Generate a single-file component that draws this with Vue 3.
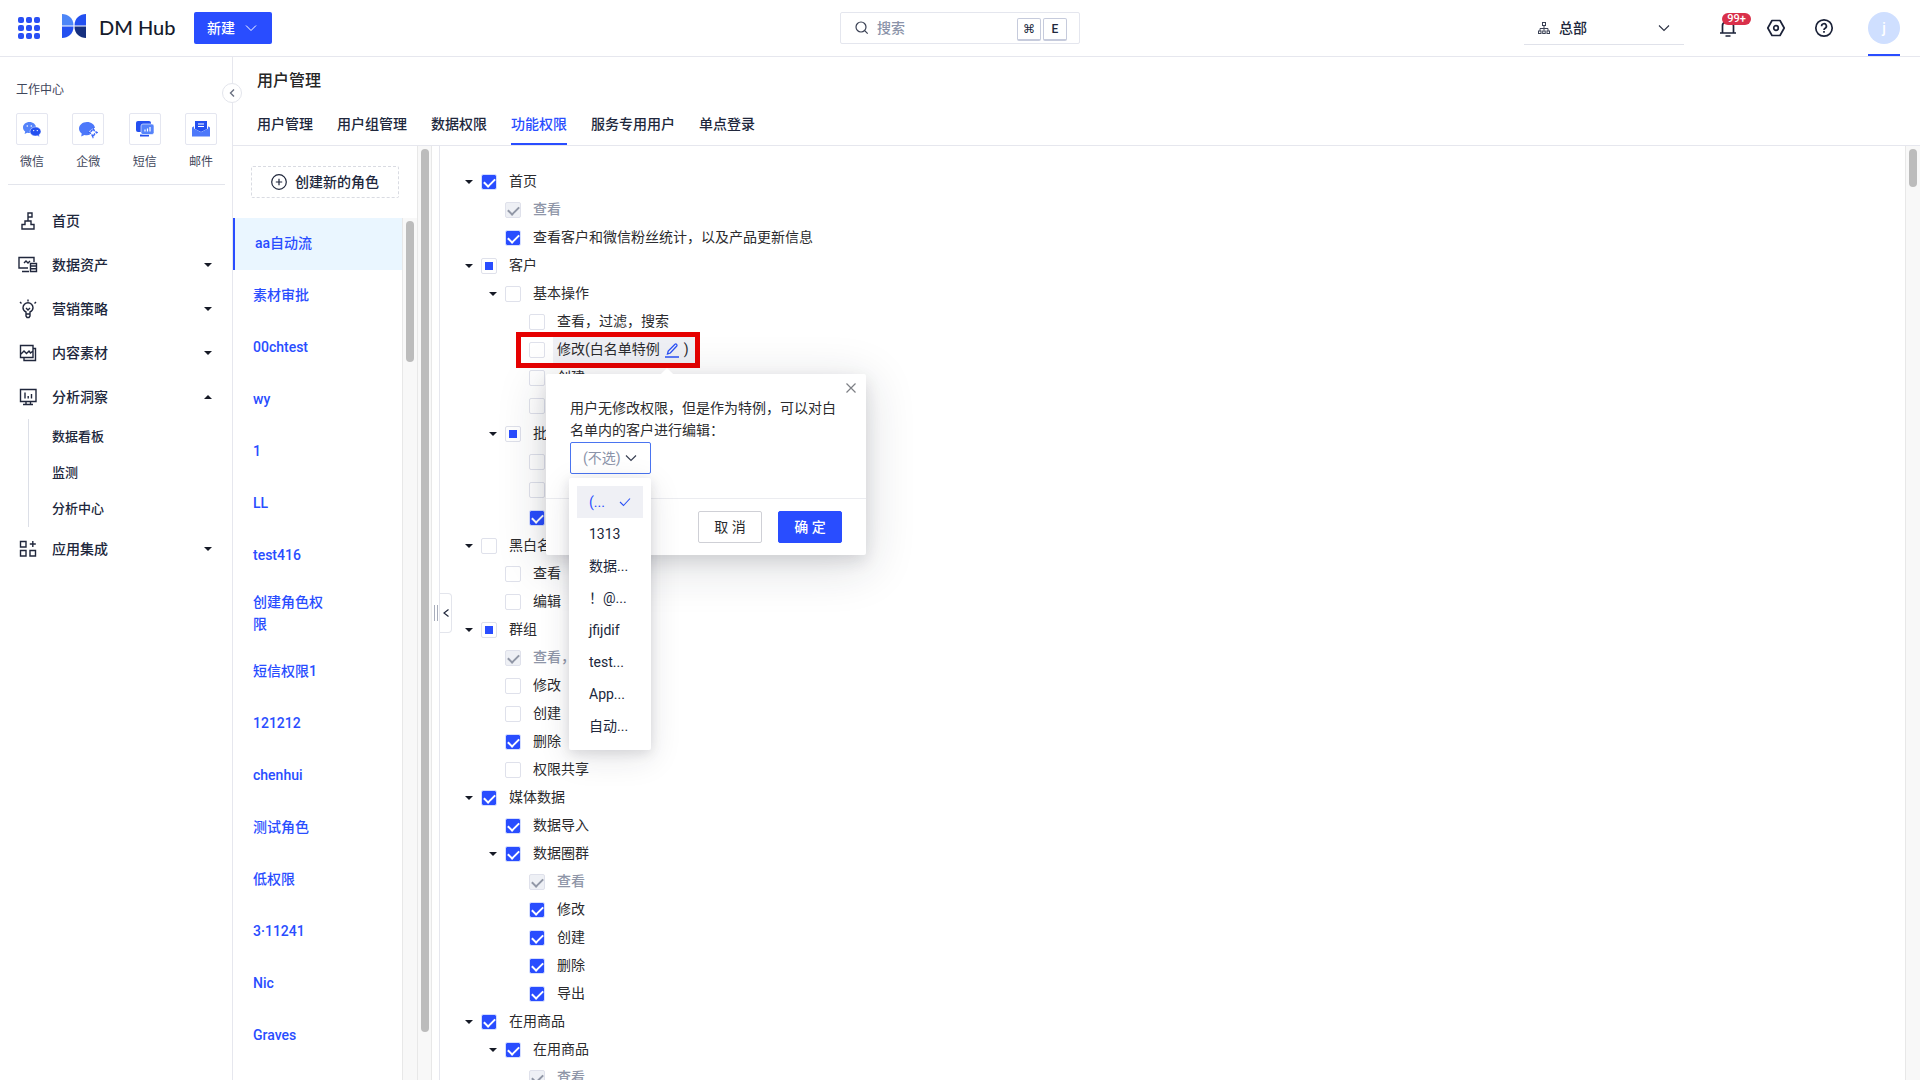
<script setup>
import { ref } from 'vue'

const shortcuts = [
  { label: '微信', icon: 'wechat' },
  { label: '企微', icon: 'wecom' },
  { label: '短信', icon: 'sms' },
  { label: '邮件', icon: 'mail' },
]

const menu = [
  { label: '首页', icon: 'home' },
  { label: '数据资产', icon: 'data', caret: 'down' },
  { label: '营销策略', icon: 'bulb', caret: 'down' },
  { label: '内容素材', icon: 'content', caret: 'down' },
  { label: '分析洞察', icon: 'analysis', caret: 'up', children: ['数据看板', '监测', '分析中心'] },
  { label: '应用集成', icon: 'apps', caret: 'down' },
]

const tabs = ['用户管理', '用户组管理', '数据权限', '功能权限', '服务专用用户', '单点登录']
const activeTab = ref('功能权限')

const roles = [
  'aa自动流', '素材审批', '00chtest', 'wy', '1', 'LL', 'test416', '创建角色权限',
  '短信权限1', '121212', 'chenhui', '测试角色', '低权限', '3·11241', 'Nic', 'Graves',
]
const activeRole = ref('aa自动流')

const tree = ref([
  { level: 0, label: '首页', state: 'on', open: true },
  { level: 1, label: '查看', state: 'locked' },
  { level: 1, label: '查看客户和微信粉丝统计，以及产品更新信息', state: 'on' },
  { level: 0, label: '客户', state: 'part', open: true },
  { level: 1, label: '基本操作', state: 'off', open: true },
  { level: 2, label: '查看，过滤，搜索', state: 'off' },
  { level: 2, label: '修改', state: 'off', exception: true },
  { level: 2, label: '创建', state: 'off' },
  { level: 2, label: '删除', state: 'off' },
  { level: 1, label: '批量操作', state: 'part', open: true },
  { level: 2, label: '导入', state: 'off' },
  { level: 2, label: '修改', state: 'off' },
  { level: 2, label: '导出', state: 'on' },
  { level: 0, label: '黑白名单', state: 'off', open: true },
  { level: 1, label: '查看', state: 'off' },
  { level: 1, label: '编辑', state: 'off' },
  { level: 0, label: '群组', state: 'part', open: true },
  { level: 1, label: '查看，搜索', state: 'locked' },
  { level: 1, label: '修改', state: 'off' },
  { level: 1, label: '创建', state: 'off' },
  { level: 1, label: '删除', state: 'on' },
  { level: 1, label: '权限共享', state: 'off' },
  { level: 0, label: '媒体数据', state: 'on', open: true },
  { level: 1, label: '数据导入', state: 'on' },
  { level: 1, label: '数据圈群', state: 'on', open: true },
  { level: 2, label: '查看', state: 'locked' },
  { level: 2, label: '修改', state: 'on' },
  { level: 2, label: '创建', state: 'on' },
  { level: 2, label: '删除', state: 'on' },
  { level: 2, label: '导出', state: 'on' },
  { level: 0, label: '在用商品', state: 'on', open: true },
  { level: 1, label: '在用商品', state: 'on', open: true },
  { level: 2, label: '查看', state: 'locked' },
])

const options = ['(...', '1313', '数据...', '！@...', 'jfijdif', 'test...', 'App...', '自动...']
</script>

<template>
  <div class="app">
    <header class="topbar">
      <div class="brand">
        <button class="plain" aria-label="应用">
          <svg width="22" height="22" viewBox="0 0 22 22" fill="#2a50f5">
            <template v-for="r in 3" :key="r">
              <rect v-for="c in 3" :key="c" :x="(c - 1) * 8" :y="(r - 1) * 8" width="6" height="6" rx="2" />
            </template>
          </svg>
        </button>
        <svg class="logo" width="24" height="24" viewBox="0 0 24 24">
          <path d="M0 0C6 0 11.500 4 11.500 11.500H0Z" fill="#4d86f7" />
          <path d="M24 0C18 0 12.500 4 12.500 11.500H24Z" fill="#2350f0" />
          <path d="M0 12.500H11.500C11.500 20 6 24 0 24Z" fill="#2350f0" />
          <path d="M24 12.500H12.500C12.500 20 18 24 24 24Z" fill="#16307f" />
        </svg>
        <span class="wordmark">DM Hub</span>
        <button class="create">
          新建
          <svg width="12" height="12" viewBox="0 0 12 12" fill="none" stroke="#fff" stroke-width="1"><path d="M1 3.500l5 5 5-5" /></svg>
        </button>
      </div>

      <label class="search">
        <svg width="14" height="14" viewBox="0 0 14 14" fill="none" stroke="#3a4154" stroke-width="1.2"><circle cx="6" cy="6" r="5" /><path d="M9.700 9.700l3 3" /></svg>
        <input type="text" placeholder="搜索" aria-label="搜索" />
        <kbd>⌘</kbd>
        <kbd>E</kbd>
      </label>

      <div class="tools">
        <label class="org">
          <svg width="12" height="12" viewBox="0 0 12 12" fill="none" stroke="#3a4154" stroke-width="1"><rect x="4.500" y=".5" width="3" height="3" /><path d="M6 3.500v5M2 9V6.500h8V9" /><rect x=".5" y="9" width="2.500" height="2.500" /><rect x="4.700" y="9" width="2.500" height="2.500" /><rect x="9" y="9" width="2.500" height="2.500" /></svg>
          <select aria-label="组织"><option>总部</option></select>
          <svg width="12" height="12" viewBox="0 0 12 12" fill="none" stroke="#2a3042" stroke-width="1.1"><path d="M1 3.500l5 5 5-5" /></svg>
        </label>
        <button class="plain bell" aria-label="通知">
          <svg width="20" height="20" viewBox="0 0 20 20" fill="none" stroke="#1b2238" stroke-width="1.700"><path d="M4.500 14.500V8a5.500 5.500 0 0 1 11 0v6.500M2 15h16M7.500 18h5" /></svg>
          <span class="badge">99+</span>
        </button>
        <button class="plain" aria-label="设置">
          <svg width="20" height="20" viewBox="0 0 20 20" fill="none" stroke="#1b2238" stroke-width="1.700"><path d="M6 2.500h8L18.200 10 14 17.500H6L1.800 10Z" stroke-linejoin="round" /><circle cx="10" cy="10" r="2.300" /></svg>
        </button>
        <button class="plain" aria-label="帮助">
          <svg width="20" height="20" viewBox="0 0 20 20" fill="none" stroke="#1b2238" stroke-width="1.700"><circle cx="10" cy="10" r="8.200" /><path d="M7.600 8.200a2.400 2.400 0 1 1 3.600 2c-.8.500-1.200.9-1.200 1.700M10 13v1.700" /></svg>
        </button>
        <button class="avatar"><span>j</span></button>
      </div>
    </header>

    <div class="body">
      <aside class="sidebar">
        <h2>工作中心</h2>
        <nav class="shortcuts">
          <a v-for="s in shortcuts" :key="s.label" href="#">
            <span class="tile">
              <svg v-if="s.icon === 'wechat'" width="20" height="20" viewBox="0 0 20 20">
                <path d="M7.500 3C3.900 3 1 5.400 1 8.500c0 1.700.8 3 2.200 4L2.600 15l2.700-1.300c.7.200 1.400.3 2.200.3C11 14 14 11.600 14 8.500S11 3 7.500 3Z" fill="#5583fa" />
                <path d="M13.500 8C10.400 8 8 10 8 12.500S10.400 17 13.500 17c.6 0 1.200-.1 1.800-.3l2.200 1-.5-1.900c1.200-.8 2-2 2-3.300C19 10 16.600 8 13.500 8Z" fill="#2450f0" stroke="#fff" stroke-width=".5" />
                <g fill="#fff"><circle cx="5.300" cy="7" r=".8" /><circle cx="9.300" cy="7" r=".8" /><circle cx="11.700" cy="11.600" r=".7" /><circle cx="15.300" cy="11.600" r=".7" /></g>
              </svg>
              <svg v-else-if="s.icon === 'wecom'" width="20" height="20" viewBox="0 0 20 20">
                <path d="M9 3C4.600 3 1 5.900 1 9.600c0 2 1 3.700 2.700 4.900L3.200 17.500l3.200-1.600c.8.200 1.700.3 2.600.3 1 0 2-.2 2.900-.5L11 12.500l4-3.500h2C16.600 5.500 13.200 3 9 3Z" fill="#4d78fa" />
                <path d="M15 9.500l1.500 2.500 2.500 1.500-2.500 1.500L15 18l-1.500-3L11 13.500l2.500-1.500Z" fill="none" stroke="#3b66f8" stroke-width="1.500" stroke-dasharray="3 1" />
              </svg>
              <svg v-else-if="s.icon === 'sms'" width="20" height="20" viewBox="0 0 20 20">
                <path d="M3 2h11a2 2 0 0 1 2 2v9H3a2 2 0 0 1-2-2V4a2 2 0 0 1 2-2Z" fill="#2450f0" /><path d="M5 15.500h9v2H5Z" fill="#2450f0" />
                <rect x="6" y="5" width="13" height="10.500" rx="2" fill="#5583fa" stroke="#fff" stroke-width=".6" />
                <path d="M10 12.500v-2M12.500 12.500v-3M15 12.500V8" stroke="#fff" stroke-width="1.200" />
              </svg>
              <svg v-else width="20" height="20" viewBox="0 0 20 20">
                <path d="M4 2h12v8l-6 3-6-3Z" fill="#2450f0" /><path d="M7 5h6M7 7.500h6" stroke="#fff" stroke-width="1.100" />
                <path d="M1 8.500l2-1.300v2.300l7 3.700 7-3.700V7.200l2 1.300v9H1Z" fill="#4d78fa" />
              </svg>
            </span>
            {{ s.label }}
          </a>
        </nav>
        <nav class="menu">
          <template v-for="m in menu" :key="m.label">
            <a class="entry" href="#">
              <svg width="20" height="20" viewBox="0 0 20 20" fill="none" stroke="#20273c" stroke-width="1.400">
                <path v-if="m.icon === 'home'" d="M4 18v-4.500h3V10h6v3.500h3V18ZM10 10V2h4v4h-4" />
                <path v-else-if="m.icon === 'data'" d="M10 13H1V2.500h15V7M4 16.500h7M6 8l2-2 2 2 2-2M12.500 8.500h6v8h-6ZM12.500 11h6M12.500 13.800h6" />
                <path v-else-if="m.icon === 'bulb'" d="M8 15v-2C6 12 5 10.500 5 8.800a5 5 0 0 1 10 0c0 1.700-1 3.200-3 4.200v2ZM8 15v2l1 1.500h2l1-1.500v-2M8 9l2 2 2-2M10 .5V2.500M2 3l1.500 1.500M18 3l-1.500 1.500" />
                <path v-else-if="m.icon === 'content'" d="M2.500 2.500h12.500v12H2.500ZM15 5.500h2.500v12H6v-3M3 11l3-3 2.500 2.500L11 8l1.500 2 2.500-2" />
                <path v-else-if="m.icon === 'analysis'" d="M2.500 2.500h15.500v12H2.500ZM5 17.500h10M8 14.500v3M12.500 14.500v3M7 5.500v6M10.200 9v2.500M13.500 7v4.500" />
                <path v-else d="M2.500 2.500h5.500v5.500H2.500ZM2.500 11.500h5.500v5.500H2.500ZM12 11.500h5.500v5.500H12ZM14.800 2v6M11.800 5h6" />
              </svg>
              <span>{{ m.label }}</span>
              <i v-if="m.caret" :class="['caret', m.caret]"></i>
            </a>
            <div v-if="m.children" class="submenu">
              <a v-for="c in m.children" :key="c" href="#">{{ c }}</a>
            </div>
          </template>
        </nav>
        <button class="fold" aria-label="收起菜单">
          <svg width="6" height="8" viewBox="0 0 6 8" fill="none" stroke="#6a7080" stroke-width="1.400"><path d="M5 .5L1.500 4 5 7.500" /></svg>
        </button>
      </aside>

      <main class="page">
        <div class="page-head">
          <h1>用户管理</h1>
          <nav class="tabs">
            <a v-for="t in tabs" :key="t" href="#" :class="{ active: t === activeTab }" @click.prevent="activeTab = t">{{ t }}</a>
          </nav>
        </div>

        <div class="panes">
          <section class="roles">
            <div class="add-wrap">
              <button class="add">
                <svg width="16" height="16" viewBox="0 0 16 16" fill="none" stroke="#20273c" stroke-width="1.200"><circle cx="8" cy="8" r="7.300" /><path d="M8 4.800v6.400M4.800 8h6.400" /></svg>
                创建新的角色
              </button>
            </div>
            <div class="role-scroll">
              <ul>
                <li v-for="r in roles" :key="r" :class="{ active: r === activeRole }">
                  <a href="#" @click.prevent="activeRole = r">{{ r }}</a>
                </li>
              </ul>
              <div class="track"><i class="thumb short"></i></div>
            </div>
          </section>
          <div class="track outer"><i class="thumb long"></i></div>
          <div class="splitter">
            <i class="grip"></i>
            <button class="handle" aria-label="收起">
              <svg width="6" height="8" viewBox="0 0 6 8" fill="none" stroke="#20273c" stroke-width="1.200"><path d="M5.500 .5L1 4l4.500 3.500" /></svg>
            </button>
          </div>

          <section class="tree">
            <div v-for="(n, i) in tree" :key="i" :class="['node', 'level-' + n.level]">
              <span class="switch"><i v-if="n.open" class="caret down"></i></span>
              <input
                :id="'perm-' + i" type="checkbox" :class="n.state"
                :checked="n.state === 'on' || n.state === 'locked'" :disabled="n.state === 'locked'"
              />
              <label v-if="!n.exception" :for="'perm-' + i" :class="{ muted: n.state === 'locked' }">{{ n.label }}</label>
              <template v-else>
                <span class="selected">
                  <label :for="'perm-' + i">{{ n.label }}(白名单特例</label>
                  <button class="plain edit" aria-label="编辑白名单特例">
                    <svg width="16" height="16" viewBox="0 0 16 16" fill="none" stroke="#2a50f5" stroke-width="1.300"><path d="M3.500 12l.7-3L11 2.200a1.300 1.300 0 0 1 1.800 1.800L6.300 11ZM1 15h14" /></svg>
                  </button>
                  <span>)</span>
                </span>
                <div class="highlight"></div>
                <div class="popover" role="dialog">
                  <i class="arrow"></i>
                  <button class="plain close" aria-label="关闭">
                    <svg width="10" height="10" viewBox="0 0 10 10" stroke="#7d7f85" stroke-width="1.200"><path d="M.5 .5l9 9M9.500 .5l-9 9" /></svg>
                  </button>
                  <div class="pop-body">
                    <label for="whitelist">用户无修改权限，但是作为特例，可以对白名单内的客户进行编辑：</label>
                    <div class="picker">
                      <select id="whitelist"><option>(不选)</option></select>
                      <svg width="12" height="12" viewBox="0 0 12 12" fill="none" stroke="#3a4154" stroke-width="1.200"><path d="M1 3.500l5 5 5-5" /></svg>
                      <ul class="options" role="listbox">
                        <li v-for="(o, k) in options" :key="o" role="option" :aria-selected="k === 0">
                          {{ o }}
                          <svg v-if="k === 0" width="12" height="12" viewBox="0 0 12 12" fill="none" stroke="#2a50f5" stroke-width="1.100"><path d="M1 6l3.500 3.500L11 2.500" /></svg>
                        </li>
                      </ul>
                    </div>
                  </div>
                  <div class="pop-foot">
                    <button class="cancel">取 消</button>
                    <button class="ok">确 定</button>
                  </div>
                </div>
              </template>
            </div>
          </section>
          <div class="track right"><i class="thumb tiny"></i></div>
        </div>
      </main>
    </div>
  </div>
</template>

<style>
body { background: #fff; }
</style>

<style scoped>
* { box-sizing: border-box; }
.app {
  display: flex; flex-direction: column; height: 100vh; overflow: hidden;
  font: 500 14px/22px Roboto, "Noto Sans CJK SC", sans-serif; color: #20273c;
}
button, input, select { font: inherit; color: inherit; margin: 0; }
button { cursor: pointer; }
a { color: inherit; text-decoration: none; }
ul { list-style: none; margin: 0; padding: 0; }
svg { display: block; flex: none; }
.plain { border: 0; background: none; padding: 0; }

.topbar {
  flex: none; display: grid; grid-template-columns: 1fr 240px 1fr; align-items: center;
  height: 57px; padding: 0 20px; border-bottom: 1px solid #e6e7ee;
}
.brand { display: flex; align-items: center; margin-left: -2px; }
.logo { margin: 0 13px 4px 22px; }
.wordmark { font: 500 20px/24px Lato, "Noto Sans CJK SC", sans-serif; color: #161b2c; width: 95px; padding-bottom: 2px; }
.create {
  display: flex; align-items: center; gap: 10px; height: 32px; width: 78px; padding: 0 0 0 13px;
  border: 0; border-radius: 2px; background: #294dff; color: #fff; white-space: nowrap;
}
.search { display: flex; align-items: center; height: 32px; padding: 0 12px 0 14px; border: 1px solid #e4e6ee; border-radius: 2px; gap: 2px; }
.search input { flex: 1; min-width: 0; border: 0; outline: 0; padding: 0 0 0 6px; background: none; }
.search input::placeholder { color: #8b93a9; opacity: 1; }
kbd {
  width: 24px; height: 23px; margin-top: 3px; border: 1px solid #c6cbdc; border-bottom-width: 2px; border-radius: 2px;
  font: 500 12px/20px Roboto, "DejaVu Sans", sans-serif; text-align: center;
}
.tools { display: flex; align-items: center; justify-content: flex-end; gap: 28px; }
.org { display: flex; align-items: center; width: 160px; height: 34px; padding: 0 14px; margin-right: 6px; border-bottom: 1px solid #e0e2ea; }
.org select { flex: 1; appearance: none; border: 0; background: none; padding: 0 0 0 9px; }
.bell { position: relative; }
.badge {
  position: absolute; left: 4px; top: -5px; width: 29px; height: 12px; border-radius: 6px;
  background: #d9304a; color: #fff; font: 500 11px/12px Roboto, sans-serif; text-align: center;
}
.avatar { height: 56px; width: 32px; margin-left: 6px; padding: 0; border: 0; border-bottom: 2px solid #294dff; background: none; }
.avatar span { display: block; height: 32px; margin-top: 2px; border-radius: 50%; background: #cfdfff; color: #fff; line-height: 32px; }

.body { flex: 1; display: flex; min-height: 0; }
.sidebar { position: relative; z-index: 1; flex: none; width: 233px; padding-top: 22px; border-right: 1px solid #e6e7ee; }
.sidebar h2 { margin: 0 16px 12px; font-size: 12px; line-height: 22px; font-weight: 400; color: #3f475c; }
.shortcuts { display: flex; justify-content: space-between; margin: 0 7px 0 8px; padding: 0 8px 11px; border-bottom: 1px solid #e3e5ec; }
.shortcuts a { display: flex; flex-direction: column; align-items: center; gap: 6px; font-size: 12px; font-weight: 400; color: #3f475c; }
.tile { display: flex; align-items: center; justify-content: center; width: 32px; height: 32px; border: 1px solid #e4e6f0; border-radius: 2px; }
.menu { padding-top: 14px; }
.entry { display: flex; align-items: center; height: 44px; padding: 0 20px 0 18px; gap: 14px; }
.caret { width: 0; height: 0; border: solid transparent; border-width: 0 4px; }
.caret.down { border-top: 4px solid #161a26; }
.caret.up { border-bottom: 4px solid #161a26; }
.entry .caret { margin-left: auto; }
.submenu { margin-left: 28px; border-left: 1px solid #dcdfe7; }
.submenu a { display: block; height: 36px; padding-left: 23px; font-size: 13px; line-height: 36px; }
.fold {
  position: absolute; right: -10px; top: 26px; width: 20px; height: 20px; border: 1px solid #e3e5ec; border-radius: 50%;
  background: #fff; display: flex; align-items: center; justify-content: center; padding: 0;
}

.page { flex: 1; min-width: 0; display: flex; flex-direction: column; }
.page-head { flex: none; padding: 12px 24px 0; border-bottom: 1px solid #e6e7ee; }
h1 { margin: 0 0 12px; font-size: 16px; line-height: 24px; font-weight: 500; color: #262626; }
.tabs { display: flex; gap: 24px; }
.tabs a { height: 40px; line-height: 38px; border-bottom: 2px solid transparent; }
.tabs a.active { color: #294dff; border-color: #294dff; }

.panes { flex: 1; display: flex; min-height: 0; }
.roles { flex: none; width: 184px; display: flex; flex-direction: column; }
.add-wrap { padding: 20px 18px; }
.add {
  width: 148px; height: 32px; display: flex; align-items: center; justify-content: center; gap: 8px; padding: 0;
  border: 1px dashed #d9dbe2; border-radius: 2px; background: #fff;
}
.role-scroll { flex: 1; display: flex; min-height: 0; overflow: hidden; }
.role-scroll ul { flex: 1; }
.role-scroll li { display: flex; align-items: center; min-height: 52px; padding: 9px 72px 11px 20px; color: #294dff; }
.role-scroll li.active { background: #eaf6ff; border-left: 2px solid #294dff; }
.track { flex: none; width: 15px; background: #f8f8f8; border: solid #e8e8e8; border-width: 0 0 0 1px; padding: 3px; }
.track.outer { border-right-width: 1px; }
.thumb { display: block; width: 8px; border-radius: 4px; background: #bcbcbc; }
.short { height: 141px; }
.long { height: calc(100% - 45px); }
.tiny { height: 38px; }
.splitter { position: relative; flex: none; width: 8px; border-right: 1px solid #e6e7ee; display: flex; align-items: center; justify-content: center; }
.grip { width: 4px; height: 16px; border: solid #a8adbb; border-width: 0 1px; }
.handle {
  position: absolute; left: 8px; top: 50%; width: 12px; height: 40px; margin-top: -20px; padding: 0; display: flex; align-items: center; justify-content: center;
  border: 1px solid #e3e5ec; border-left: 0; border-radius: 0 4px 4px 0; background: #fff;
}

.tree { flex: 1; min-width: 0; padding: 22px 0 0 17px; color: #2b2b2e; font-weight: 400; }
.node { position: relative; display: flex; align-items: center; height: 28px; }
.level-1 { padding-left: 24px; }
.level-2 { padding-left: 48px; }
.switch { width: 24px; display: flex; justify-content: center; }
.node > label { margin-left: 12px; padding-bottom: 2px; }
.node > .muted { color: #8f96a8; font-weight: 500; }
.node > input {
  appearance: none; flex: none; width: 16px; height: 16px; border: 1px solid #dfe1eb; border-radius: 2px; background: #fff;
}
.node > .on { border-color: #d5deff; background-color: #294dff; background-clip: padding-box; }
.node > .locked { background-color: #eef0f5; }
.node > .on::after, .node > .locked::after {
  content: ""; display: block; width: 5px; height: 9px; margin: 1px 0 0 4px;
  border: solid #fff; border-width: 0 2px 2px 0; transform: rotate(45deg);
}
.node > .locked::after { border-color: #9197a6; }
.node > .part::after { content: ""; display: block; width: 8px; height: 8px; margin: 3px; background: #294dff; }
.selected { display: flex; align-items: center; height: 28px; margin-left: 8px; padding: 0 6px 2px 4px; background: #eff0f5; }
.edit { margin: 2px 4px 0; }
.highlight { position: absolute; left: 59px; top: -4px; width: 184px; height: 36px; border: 5px solid #e60000; }

.popover {
  position: absolute; z-index: 5; left: 89px; top: 38px; width: 320px; border-radius: 2px; background: #fff;
  box-shadow: 0 10px 48px 4px rgba(30, 34, 50, .14), 0 6px 16px rgba(30, 34, 50, .12);
}
.arrow { position: absolute; left: 116px; top: -4px; width: 10px; height: 10px; background: #fff; transform: rotate(45deg); }
.close { position: absolute; right: 10px; top: 9px; }
.pop-body { height: 125px; padding: 23px 24px; border-bottom: 1px solid #ebecf0; }
.pop-body > label { display: block; padding-bottom: 1px; }
.picker { position: relative; width: 81px; }
.picker select {
  display: block; appearance: none; width: 100%; height: 32px; padding: 0 12px; border: 1px solid #4a74f0; border-radius: 2px; background: #fff; color: #8b93a9; opacity: 1;
}
.picker > svg { position: absolute; right: 14px; top: 10px; }
.options {
  position: absolute; left: -1px; top: 36px; width: 82px; padding: 8px; border-radius: 2px; background: #fff; color: #20273c;
  box-shadow: 0 8px 32px rgba(30, 34, 50, .12), 0 3px 12px rgba(30, 34, 50, .12);
}
.options li { display: flex; align-items: center; justify-content: space-between; height: 32px; padding: 0 12px; white-space: nowrap; }
.options li[aria-selected="true"] { background: #eff0f5; color: #294dff; }
.pop-foot { display: flex; justify-content: flex-end; gap: 16px; padding: 12px 24px; }
.pop-foot button { width: 64px; height: 32px; padding: 0; border-radius: 2px; }
.cancel { border: 1px solid #cfd0d6; background: #fff; }
.ok { border: 1px solid #294dff; background: #294dff; color: #fff; font-weight: 500; }
</style>
